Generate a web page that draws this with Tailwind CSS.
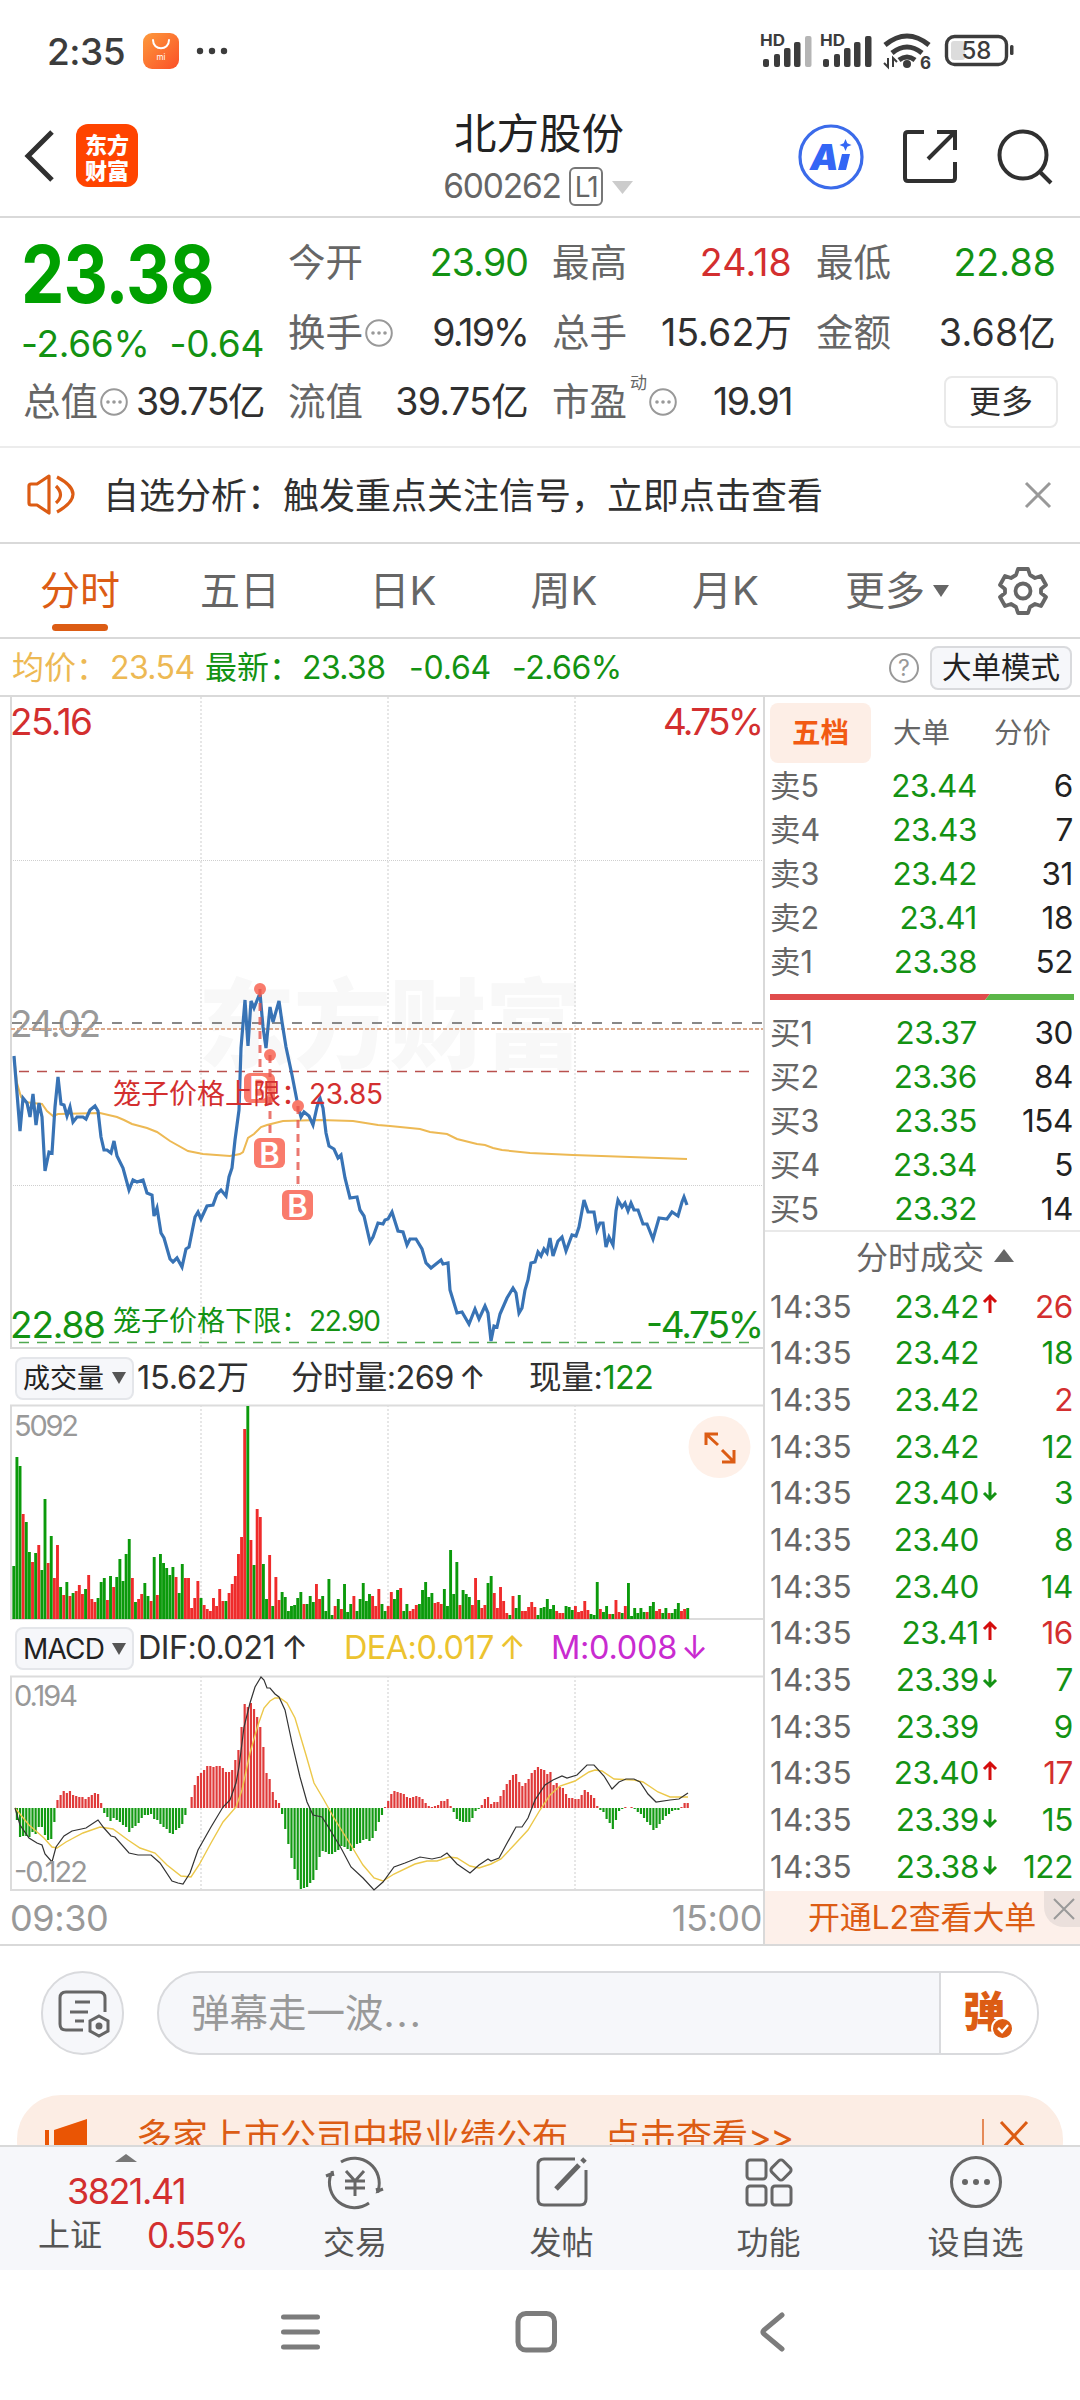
<!DOCTYPE html>
<html lang="zh-CN">
<head>
    <meta charset="UTF-8">
    <meta name="viewport" content="width=device-width, initial-scale=1.0">
    <title>北方股份 600262</title>
    <script src="https://cdn.jsdelivr.net/npm/@tailwindcss/browser@4"></script>
</head>
<body class="bg-white">

<div class="w-[1080px] h-[2400px] overflow-hidden flex flex-col bg-white text-[#303030] leading-none whitespace-nowrap font-['Inter','Noto_Sans_CJK_SC',sans-serif]">

    <!-- Status bar -->
    <div class="h-[102px] shrink-0 flex items-center justify-between pl-[47px] pr-[66px]">
        <div class="flex items-center">
            <span class="text-[37px] font-medium tracking-[-0.5px] w-[96px] text-[#3c3c3c]">2:35</span>
            <svg class="w-9 h-9" viewBox="0 0 36 36">
                <defs><linearGradient id="mi" x1="0" y1="0" x2="1" y2="1"><stop offset="0" stop-color="#fd9a3c"/><stop offset="1" stop-color="#fb4f27"/></linearGradient></defs>
                <rect width="36" height="36" rx="9" fill="url(#mi)"/>
                <path d="M10 7c0 11 16 11 16 0" fill="none" stroke="#fff" stroke-width="2" stroke-linecap="round"/>
                <text x="18" y="27" font-size="8" fill="#fff" text-anchor="middle">mi</text>
            </svg>
            <svg class="w-9 h-2 ml-[15px]" viewBox="0 0 36 8" fill="#3c3c3c"><circle cx="6" cy="4" r="3.2"/><circle cx="18" cy="4" r="3.2"/><circle cx="30" cy="4" r="3.2"/></svg>
        </div>
        <svg class="w-[254px] h-[40px]" viewBox="760 32 254 40" fill="#3c3c3c">
            <g id="signal">
                <text x="760" y="47" font-size="16" font-weight="700" textLength="25" lengthAdjust="spacingAndGlyphs">HD</text>
                <rect x="763" y="60" width="6" height="8" rx="2"/><rect x="774" y="55" width="6" height="13" rx="2"/><rect x="784" y="49" width="6.500" height="19" rx="2"/><rect x="794" y="43" width="6.500" height="25" rx="2"/>
            </g>
            <rect x="805" y="37" width="6.500" height="31" rx="2" fill="#b5b5b5"/>
            <use href="#signal" x="60"/>
            <rect x="865" y="37" width="6.500" height="31" rx="2"/>
            <g fill="none" stroke="#3c3c3c" stroke-width="5">
                <path d="M885 46q22-18 44 0"/><path d="M892 54q15-12 30 0"/><path d="M899 61q8-6 16 0"/>
            </g>
            <circle cx="907" cy="65" r="4"/>
            <path d="M888 59v9l-4-4M893 68v-9l4 4" fill="none" stroke="#3c3c3c" stroke-width="2"/>
            <text x="920" y="70" font-size="17" font-weight="700">6</text>
            <rect x="951" y="42" width="14" height="19" rx="3" fill="#dcdcdc"/>
            <rect x="946.500" y="37.500" width="60" height="28" rx="8" fill="none" stroke="#3c3c3c" stroke-width="3.400"/>
            <rect x="1010" y="46" width="3.500" height="10" rx="1.500"/>
            <text x="976.500" y="60" font-size="24" font-weight="500" text-anchor="middle">58</text>
        </svg>
    </div>

    <!-- Header -->
    <header class="h-[116px] shrink-0 flex items-center border-b-2 border-[#d9d9d9]">
        <div class="w-[358px] h-full flex items-start pl-[22px] pt-[22px]">
            <svg class="w-[34px] h-[64px]" viewBox="0 0 34 64" fill="none" stroke="#303030" stroke-width="5"><path d="M30 8 6 32l24 24"/></svg>
            <div class="ml-5 w-[62px] h-[63px] rounded-xl bg-[#ff4400] text-white font-black text-[22px] leading-[26px] flex flex-col items-center justify-center font-['Noto_Sans_CJK_SC',sans-serif]">
                <span>东方</span><span>财富</span>
            </div>
        </div>
        <div class="w-[362px] h-full flex flex-col items-center">
            <div class="text-[42.500px] mt-[11px] text-[#222]">北方股份</div>
            <div class="flex items-center mt-[11px] text-[#666] h-[40px] pr-[2px]">
                <span class="text-[33.500px] tracking-[-1.200px]">600262</span>
                <span class="ml-2 w-[34px] h-[39px] border-2 border-[#777] rounded-md text-[28px] flex items-center justify-center tracking-[-2px]">L1</span>
                <svg class="ml-[9px] w-[21px] h-[14px]" viewBox="0 0 21 14"><path d="M0 1h21l-10.500 13z" fill="#ccc"/></svg>
            </div>
        </div>
        <svg class="ml-[74px] w-[280px] h-[80px] -mt-1" viewBox="794 116 280 80" fill="none" stroke="#303030" stroke-width="4">
            <circle cx="831" cy="156" r="31" stroke="#3b6bea" stroke-width="3.200"/>
            <text x="810" y="169" font-size="36" font-weight="900" font-style="italic" fill="#3366f5" stroke="none" stroke-width="0">A</text>
            <path d="m838 169 4-16h8l-4 16z" fill="#3366f5" stroke="none"/>
            <path d="M845.500 138l1.800 4.200 4.200 1.800-4.200 1.800-1.800 4.200-1.800-4.200-4.200-1.800 4.200-1.800z" fill="#3366f5" stroke="none"/>
            <path d="M924 131h-16q-3 0-3 3v43q0 3 3 3h44q3 0 3-3v-16M937 131h18v18M954 132l-26 26"/>
            <circle cx="1023" cy="154" r="23.500"/><path d="m1039 170 12 12"/>
        </svg>
    </header>

    <!-- Quote summary -->
    <section class="h-[230px] shrink-0 flex gap-6 px-6 pt-[10px] border-b-2 border-[#ececec] text-[37.500px] text-[#666]">
        <div class="w-60 shrink-0 flex flex-col">
            <div class="h-[91px] flex items-center text-[#00a000] -ml-[3px]">
                <span class="text-[80px] font-bold origin-left scale-x-[0.86] tracking-[-1px]">23.38</span>
            </div>
            <div class="h-12 flex items-center justify-between text-[#139213] text-[37px] tracking-[-0.300px] -ml-[3px]"><span>-2.66%</span><span>-0.64</span></div>
            <div class="h-[69px] flex items-center justify-between -ml-[1px]">
                <div class="flex items-center">总值<svg class="w-[28px] h-[28px] ml-[2px]" viewBox="0 0 28 28"><use href="#info"/></svg></div>
                <span class="text-[#303030] tracking-[-1.500px]">39.75亿</span>
            </div>
        </div>
        <div class="grid grid-cols-3 grid-rows-[70px_69px_69px] gap-x-6 flex-1">
            <div class="flex items-center justify-between">今开<span class="text-[#139213] tracking-[-0.900px]">23.90</span></div>
            <div class="flex items-center justify-between">最高<span class="text-[#d32f2f] tracking-[0.200px]">24.18</span></div>
            <div class="flex items-center justify-between">最低<span class="text-[#139213] tracking-[0.100px]">22.88</span></div>
            <div class="flex items-center justify-between"><div class="flex items-center">换手<svg class="w-[28px] h-[28px] ml-[2px]" viewBox="0 0 28 28"><use href="#info"/></svg></div><span class="text-[#303030] tracking-[-1.900px]">9.19%</span></div>
            <div class="flex items-center justify-between">总手<span class="text-[#303030] tracking-[0.100px]">15.62万</span></div>
            <div class="flex items-center justify-between">金额<span class="text-[#303030] tracking-[0.200px]">3.68亿</span></div>
            <div class="flex items-center justify-between">流值<span class="text-[#303030] tracking-[-0.700px]">39.75亿</span></div>
            <div class="flex items-center justify-between"><div class="flex items-center">市盈<span class="text-[17px] -mt-9 ml-[3px]">动</span><svg class="w-[28px] h-[28px] ml-[2px]" viewBox="0 0 28 28"><use href="#info"/></svg></div><span class="text-[#303030] tracking-[-1.500px]">19.91</span></div>
            <div class="flex items-center justify-end -mr-[2px]"><div class="w-[114px] h-[52px] rounded-lg border-2 border-[#e9e9e9] text-[32px] text-[#303030] flex items-center justify-center">更多</div></div>
        </div>
        <svg class="hidden"><defs>
            <g id="info"><circle cx="14" cy="14" r="12.800" fill="none" stroke="#999" stroke-width="2"/><g fill="#999"><circle cx="8" cy="14" r="1.800"/><circle cx="14" cy="14" r="1.800"/><circle cx="20" cy="14" r="1.800"/></g></g>
        </defs></svg>
    </section>

    <!-- Notice -->
    <section class="h-[96px] shrink-0 flex items-center px-[26px] border-b-2 border-[#d9d9d9]">
        <svg class="w-[50px] h-[42px]" viewBox="0 0 50 42" fill="none" stroke="#dc5c14" stroke-width="3.200" stroke-linejoin="round"><path d="M11 10H5q-2 0-2 2v17q0 2 2 2h6l12 8V2zM30 12q9 9 0 17M31 3q32 17 0 35"/></svg>
        <span class="ml-[27px] text-[36px] pt-[2px]">自选分析：触发重点关注信号，立即点击查看</span>
        <svg class="ml-auto w-[32px] h-[32px]" viewBox="0 0 32 32" stroke="#999" stroke-width="3"><path d="m4 4 24 24M28 4 4 28"/></svg>
    </section>

    <!-- Period tabs -->
    <nav class="h-[95px] shrink-0 flex items-center border-b-2 border-[#d9d9d9] text-[40px] text-[#666]">
        <div class="w-[160px] h-full relative flex items-center justify-center text-[#dc5c14]">分时<span class="absolute bottom-[6px] w-[56px] h-[7px] rounded-full bg-[#dc5c14]"></span></div>
        <div class="w-[160px] text-center">五日</div>
        <div class="w-[166px] text-center">日K</div>
        <div class="w-[156px] text-center">周K</div>
        <div class="w-[167px] text-center">月K</div>
        <div class="flex items-center pl-9">更多<svg class="w-[16px] h-[12px] ml-[8px]" viewBox="0 0 16 12"><path d="M0 0h16L8 12z" fill="#666"/></svg></div>
        <svg class="ml-[48px] w-[52px] h-[52px]" viewBox="-26 -26 52 52" fill="none" stroke="#666" stroke-width="3.800" stroke-linejoin="round"><path d="M-5-22H5L7-16 12-13 18-15 23-6 18-2V2L23 6 18 15 12 13 7 16 5 22H-5L-7 16-12 13-18 15-23 6-18 2V-2L-23-6-18-15-12-13-7-16z"/><circle r="7.500"/></svg>
    </nav>

    <!-- Price info -->
    <section class="h-[58px] shrink-0 flex items-center pl-[12px] pr-[8px] pt-[2px] border-b-2 border-[#d9d9d9] text-[32px]">
        <span class="text-[#edb954] w-[98px]">均价：</span><span class="text-[#edb954] w-[95px] tracking-[-0.600px]">23.54</span>
        <span class="text-[#139213] w-[97px]">最新：</span><span class="text-[#139213] w-[107px] tracking-[-0.600px]">23.38</span>
        <span class="text-[#139213] w-[103px] tracking-[-0.200px]">-0.64</span><span class="text-[#139213] tracking-[-0.500px]">-2.66%</span>
        <div class="ml-auto w-[30px] h-[30px] rounded-full border-2 border-[#999] text-[#999] text-[23px] flex items-center justify-center">?</div>
        <div class="ml-[11px] w-[142px] h-[44px] rounded-lg border-2 border-[#d9dadd] bg-[#f6f7fa] text-[29.500px] text-[#222] flex items-center justify-center">大单模式</div>
    </section>

    <!-- Charts and order book -->
    <section class="h-[1249px] shrink-0 flex border-b-2 border-[#d9d9d9]">
        <div class="w-[763px] shrink-0 flex flex-col">

            <!-- Intraday price -->
            <svg class="w-[763px] h-[653px] shrink-0" viewBox="0 697 763 653" fill="none">
                <text x="198" y="1060" font-size="97" font-weight="900" fill="#f8f8f8" textLength="384">东方财富</text>
                <g stroke="#dedede" stroke-width="1.500" stroke-dasharray="2 2"><path d="M201 697v651M388 697v651M575 697v651"/></g>
                <g stroke="#cfcfcf" stroke-dasharray="1 1"><path d="M11 860.500h752M11 1185.500h752"/></g>
                <path d="M11 697v651h752" stroke="#d9d9d9" stroke-width="2"/>
                <text x="10" y="1037" font-size="37" fill="#999" textLength="91">24.02</text>
                <path d="M12 1023h751" stroke="#888" stroke-width="2" stroke-dasharray="10 10"/>
                <path d="M11 1029h752" stroke="#dba98b" stroke-width="2" stroke-dasharray="4 2"/>
                <path d="M19 1071.500h732" stroke="#b9504e" stroke-width="1.300" stroke-dasharray="10 8"/>
                <path d="M19 1342.500h732" stroke="#4fa850" stroke-width="1.300" stroke-dasharray="10 8"/>
                <polyline stroke="#edb954" stroke-width="2" points="14,1056 17,1083 21,1097 26,1102 32,1103 42,1104 47,1111 53,1116 58,1114 100,1113 117,1117 124,1120 132,1124 147,1128 157,1132 170,1141 188,1151 203,1154 230,1156 240,1154 243,1152 248,1138 254,1134 261,1127 267,1125 283,1121 320,1120 353,1121 378,1125 390,1126 420,1129 430,1132 447,1134 457,1139 477,1144 485,1145 493,1148 502,1150 530,1153 573,1155 687,1159"/>
                <polyline stroke="#3873b5" stroke-width="3.200" points="14,1056 17,1093 20,1131 23,1098 27,1103 30,1117 33,1094 36,1125 39,1103 42,1117 45,1171 49,1152 52,1153 55,1107 58,1077 61,1104 64,1105 67,1116 70,1107 73,1122 77,1117 83,1117 86,1119 90,1110 95,1106 98,1111 101,1137 104,1150 107,1150 111,1153 114,1141 117,1156 123,1168 129,1190 133,1180 137,1182 143,1180 147,1193 152,1195 154,1216 157,1208 161,1233 164,1238 170,1259 173,1262 177,1258 182,1267 186,1249 189,1247 195,1217 198,1212 201,1219 207,1206 213,1205 217,1194 221,1190 226,1196 229,1177 232,1168 235,1140 239,1110 241,1048 245,1000 248,1046 251,1001 254,1008 260,993 263,1027 266,1048 270,1007 273,1022 279,1001 282,1022 286,1047 292,1075 298,1106 301,1117 304,1112 309,1116 313,1125 317,1107 320,1098 323,1108 326,1133 329,1146 334,1149 338,1158 341,1155 345,1178 350,1198 357,1197 360,1210 364,1216 370,1242 373,1237 378,1223 383,1224 385,1220 388,1219 392,1212 398,1231 403,1232 407,1245 410,1239 416,1239 422,1249 426,1263 431,1268 441,1260 443,1264 448,1263 450,1290 457,1313 462,1312 469,1324 475,1309 479,1319 485,1306 488,1313 491,1341 494,1326 497,1327 500,1314 507,1298 513,1288 516,1293 519,1313 522,1308 525,1290 528,1280 531,1263 535,1262 538,1252 541,1256 544,1249 547,1253 550,1238 553,1256 558,1241 562,1237 566,1251 572,1235 576,1236 579,1227 584,1200 588,1212 594,1212 597,1230 600,1223 603,1223 606,1247 609,1237 613,1245 616,1211 618,1200 622,1207 625,1203 628,1211 631,1203 634,1210 638,1210 643,1224 647,1224 653,1239 659,1218 667,1219 672,1212 678,1216 682,1202 684,1197 687,1205"/>
                <g fill="#f97b6c">
                    <rect x="244" y="1073" width="31" height="30" rx="6"/><rect x="254" y="1138" width="31" height="30" rx="6"/><rect x="282" y="1190" width="31" height="30" rx="6"/>
                    <circle cx="260" cy="989" r="6"/><circle cx="270" cy="1055" r="6"/><circle cx="298" cy="1106" r="6"/>
                </g>
                <g stroke="#e5554c" stroke-opacity=".8" stroke-width="3" stroke-dasharray="8 6"><path d="M260 989v78M270 1055v78M298 1106v78"/></g>
                <g fill="#fff" font-size="31" font-weight="600" text-anchor="middle"><text x="259.500" y="1099">B</text><text x="269.500" y="1164.500">B</text><text x="297.500" y="1216.500">B</text></g>
                <g font-size="37" fill="#d32f2f"><text x="10" y="735" textLength="83">25.16</text><text x="663" y="735" textLength="101">4.75%</text></g>
                <g font-size="37" fill="#139213"><text x="10" y="1338" textLength="96">22.88</text><text x="646" y="1338" textLength="118">-4.75%</text></g>
                <g font-size="28" fill="#d32f2f"><text x="113" y="1104">笼子价格上限：</text><text x="309" y="1103.500" textLength="74">23.85</text></g>
                <g font-size="28" fill="#139213"><text x="113" y="1331">笼子价格下限：</text><text x="309" y="1330.500" textLength="72">22.90</text></g>
            </svg>

            <!-- Volume -->
            <div class="h-[54px] shrink-0 flex items-center pl-[15px] pt-[2px] text-[32.500px]">
                <div class="w-[119px] h-[43px] rounded-lg border-2 border-[#e4e6ea] bg-[#f6f7fa] text-[27px] text-[#222] flex items-center justify-center gap-[8px]">成交量<svg class="w-[14px] h-[12px]" viewBox="0 0 14 12"><path d="M0 0h14L7 12z" fill="#555"/></svg></div>
                <span class="w-[157px] pl-[3px] tracking-[-0.200px]">15.62万</span>
                <span class="w-[238px] tracking-[-0.600px]">分时量:269<span class="inline-block ml-[5px]">↑</span></span>
                <span class="tracking-[-0.300px]">现量:<span class="text-[#139213] tracking-[-0.800px]">122</span></span>
            </div>
            <svg class="w-[763px] h-[216px] shrink-0" viewBox="0 1404 763 216" fill="none">
                <g stroke="#dedede" stroke-width="1.500" stroke-dasharray="2 2"><path d="M201 1405v213M388 1405v213M575 1405v213"/></g>
                <path d="M763 1405.500H11V1619h752" stroke="#dcdcdc" stroke-width="2"/>
                <g id="volume"></g>
                <text x="14" y="1435.500" font-size="29" fill="#999" textLength="65">5092</text>
                <circle cx="719.500" cy="1447" r="31" fill="#fef0e8"/>
                <path d="M706 1445v-11h12M706 1434l12 11M734 1450v12h-12M734 1462l-12-12" stroke="#dc5c14" stroke-width="3"/>
            </svg>

            <!-- MACD -->
            <div class="h-[55px] shrink-0 flex items-center pl-[15px] pt-[2px] text-[32.500px]">
                <div class="w-[119px] h-[43px] rounded-lg border-2 border-[#e4e6ea] bg-[#f6f7fa] text-[28px] text-[#222] flex items-center justify-center gap-[8px] tracking-[-0.800px]">MACD<svg class="w-[14px] h-[12px]" viewBox="0 0 14 12"><path d="M0 0h14L7 12z" fill="#555"/></svg></div>
                <span class="w-[210px] pl-1 tracking-[-0.600px]">DIF:0.021<span class="inline-block ml-[6px]">↑</span></span>
                <span class="w-[207px] tracking-[-0.600px] text-[#ecc32f]">DEA:0.017<span class="inline-block ml-[5px]">↑</span></span>
                <span class="tracking-[-0.300px] text-[#c92bd0]">M:0.008<span class="inline-block ml-[4px]">↓</span></span>
            </div>
            <svg class="w-[763px] h-[216px] shrink-0" viewBox="0 1675 763 216" fill="none">
                <g stroke="#dedede" stroke-width="1.500" stroke-dasharray="2 2"><path d="M201 1676v213M388 1676v213M575 1676v213"/></g>
                <path d="M763 1676.500H11V1890h752" stroke="#dcdcdc" stroke-width="2"/>
                <g id="macd"></g>
                <polyline stroke="#ecc84a" stroke-width="1.400" points="15,1808 29,1825 44,1838 52,1847 57,1848 66,1842 83,1833 100,1827 113,1829 128,1840 140,1848 155,1853 167,1865 181,1876 191,1877 199,1865 211,1843 223,1822 236,1807 242,1790 250,1753 258,1725 264,1708 270,1701 275,1698 280,1698 287,1703 295,1718 306,1755 314,1783 324,1800 334,1818 349,1842 363,1865 374,1878 383,1881 394,1874 415,1864 427,1861 437,1861 449,1857 457,1858 470,1866 479,1868 491,1864 501,1859 516,1843 528,1830 540,1810 550,1795 560,1786 575,1781 589,1772 595,1770 602,1771 614,1779 634,1780 643,1782 658,1792 670,1797 688,1797"/>
                <polyline stroke="#333" stroke-width="1.200" points="15,1808 20,1825 29,1838 37,1843 42,1845 45,1854 52,1862 56,1847 64,1836 72,1831 86,1828 98,1820 104,1828 111,1836 115,1837 129,1853 138,1855 151,1855 160,1863 172,1881 178,1883 183,1884 190,1873 198,1850 211,1827 223,1807 230,1800 236,1783 239,1767 244,1727 250,1703 255,1687 261,1677 264,1680 267,1688 270,1688 275,1694 279,1697 285,1710 292,1743 300,1777 307,1802 313,1815 322,1817 329,1828 341,1848 351,1867 363,1878 374,1890 383,1882 394,1867 405,1863 420,1857 432,1859 441,1857 447,1853 457,1864 470,1873 479,1865 488,1859 491,1861 499,1858 506,1845 516,1827 522,1827 528,1818 535,1800 545,1785 553,1780 562,1776 567,1778 577,1775 587,1765 594,1765 604,1776 612,1789 619,1782 626,1779 634,1779 640,1782 648,1794 656,1802 670,1800 679,1799 688,1793"/>
                <g font-size="29" fill="#999"><text x="14" y="1706" textLength="64">0.194</text><text x="14" y="1881.500" textLength="74">-0.122</text></g>
            </svg>
            <div class="flex-1 flex items-center justify-between pl-[10px] pr-[1px] text-[36px] text-[#999] tracking-[-0.400px]"><span>09:30</span><span>15:00</span></div>
        </div>

        <!-- Order book -->
        <div class="flex-1 min-w-0 border-l-2 border-[#d9d9d9] flex flex-col text-[31.500px]">
            <div class="h-[72px] shrink-0 flex items-center pl-[5px] text-[28.500px] text-[#666]">
                <div class="w-[101px] h-[60px] rounded-lg bg-[#fdeee6] text-[#f25a13] font-bold flex items-center justify-center">五档</div>
                <div class="w-[101px] text-center">大单</div>
                <div class="w-[101px] text-center">分价</div>
            </div>
            <div id="asks" class="h-[218px] shrink-0 mt-[-5px]"></div>
            <svg class="w-[304px] h-[6px] ml-[5px] mt-[12px] mb-[12px] shrink-0" viewBox="0 0 304 6"><path d="M0 0h220l-5 6H0z" fill="#e04c4c"/><path d="M220 0h84v6h-89z" fill="#5bb649"/></svg>
            <div id="bids" class="h-[219px] shrink-0 -mt-px"></div>
            <div class="h-[53px] shrink-0 border-t-2 border-[#e9e9e9] flex items-center pl-[91px] text-[32px] text-[#666]">分时成交<svg class="w-[20px] h-[13px] ml-[10px] mb-1" viewBox="0 0 20 13"><path d="M0 13h20L10 0z" fill="#666"/></svg></div>
            <div id="trades" class="shrink-0 h-[608px]"></div>
            <div class="flex-1 relative bg-[#fdf0ea] text-[#dc5c14] text-[32px] flex items-center pl-[43px] tracking-[-0.200px]">开通L2查看大单
                <div class="absolute right-0 top-0 w-[36px] h-[36px] rounded-bl-[20px] bg-[#ebe0dc] flex items-center justify-center pl-1">
                    <svg class="w-[22px] h-[22px]" viewBox="0 0 22 22" stroke="#999" stroke-width="2"><path d="m1 1 20 20M21 1 1 21"/></svg>
                </div>
            </div>
        </div>
    </section>

    <!-- Comment input -->
    <section class="h-[149px] shrink-0 flex items-start pt-[25px] pl-[41px]">
        <div class="w-[83px] h-[84px] rounded-full border-2 border-[#d9dadd] bg-[#f6f7fa] flex items-center justify-center">
            <svg class="w-[54px] h-[52px]" viewBox="0 0 54 52" fill="none" stroke="#666" stroke-width="3"><path d="M27 43H10q-6 0-6-6V11q0-6 6-6h33q6 0 6 6v14M19 15h15M14 25h18M19 34h9"/><path d="m43 29 9 5v10l-9 5-9-5V34z"/><circle cx="43" cy="39" r="2" fill="#666"/></svg>
        </div>
        <div class="ml-[33px] w-[882px] h-[84px] rounded-full border-2 border-[#d9dadd] bg-[#f6f7fa] flex overflow-hidden">
            <div class="flex-1 flex items-center pl-[32px] text-[38.500px] text-[#999]">弹幕走一波<span class="tracking-[2px]">...</span></div>
            <div class="w-[98px] bg-white border-l-2 border-[#d9dadd] relative pl-[22px] pt-[18px] text-[42px] font-black text-[#dc5c14]">弹
                <svg class="absolute left-[50px] top-[44px] w-[23px] h-[23px]" viewBox="0 0 23 23"><circle cx="11.500" cy="11.500" r="10.500" fill="#dc5c14" stroke="#fff" stroke-width="2"/><path d="m7 11 4 4 6-7" fill="none" stroke="#fff" stroke-width="2.500"/></svg>
            </div>
        </div>
    </section>

    <!-- Announcement, partly behind the tab bar -->
    <section class="h-[50px] shrink-0 overflow-hidden px-[17px]">
        <div class="h-[90px] rounded-[44px] bg-[#fcede4] flex items-start text-[#dc5c14] pl-[28px] pt-[24px]">
            <svg class="w-[42px] h-[40px]" viewBox="0 0 42 40" fill="#ea5504"><path d="M0 11h4v29H0zM9 11 42 0v40H9z"/></svg>
            <span class="ml-[49px] text-[36px]">多家上市公司中报业绩公布　点击查看<span class="tracking-[-1.500px]">&gt;&gt;</span></span>
            <span class="ml-auto w-[2px] h-[40px] bg-[#e58a58]"></span>
            <svg class="ml-[15px] mr-[34px] w-[30px] h-[40px]" viewBox="0 0 30 40" stroke="#dc5c14" stroke-width="3"><path d="m2 3 26 28M28 3 2 31"/></svg>
        </div>
    </section>

    <!-- Bottom tab bar -->
    <nav class="h-[125px] shrink-0 flex bg-[#f6f7fa] border-t-2 border-[#d9d9d9] text-[32px] text-[#555]">
        <div class="w-[252px] flex flex-col items-center pt-[7px]">
            <svg class="w-[22px] h-[8px]" viewBox="0 0 22 8"><path d="M0 8h22L11 0z" fill="#777"/></svg>
            <span class="mt-[11px] h-[36px] text-[36px] text-[#d32f2f] tracking-[-1.500px]">3821.41</span>
            <div class="mt-[6px] h-[40px] flex items-center w-full pl-[38px]"><span class="w-[109px]">上证</span><span class="text-[35px] text-[#d32f2f] tracking-[-1.500px]">0.55%</span></div>
        </div>
        <div class="w-[206px] flex flex-col items-center pt-[6px]">
            <svg class="w-[60px] h-[58px]" viewBox="-30 -29 60 58" fill="none" stroke="#666" stroke-width="3"><path d="M-14-20A25 25 0 0 1 23 9l5-2M14 21A25 25 0 0 1-24-8l-5 2M-9-11 0-1 9-11M0-1v15M-10-1h20M-10 6h20M23 11l-1-5M-23-11l1 5"/></svg>
            <span class="mt-[16px]">交易</span>
        </div>
        <div class="w-[207px] flex flex-col items-center pt-[6px]">
            <svg class="w-[60px] h-[58px]" viewBox="-30 -29 60 58" fill="none" stroke="#666" stroke-width="3"><path d="M13-23h-31q-6 0-6 6v34q0 6 6 6h36q6 0 6-6v-29"/><path d="M-6 7 17-17M20-20l3-3" stroke-width="5"/></svg>
            <span class="mt-[16px]">发帖</span>
        </div>
        <div class="w-[207px] flex flex-col items-center pt-[6px]">
            <svg class="w-[60px] h-[58px]" viewBox="-30 -29 60 58" fill="none" stroke="#666" stroke-width="3"><rect x="-22" y="-22" width="19" height="19" rx="3"/><rect x="-22" y="4" width="19" height="19" rx="3"/><rect x="3" y="4" width="19" height="19" rx="3"/><rect x="4" y="-20" width="16" height="16" rx="3" transform="rotate(45 12 -12)"/></svg>
            <span class="mt-[16px]">功能</span>
        </div>
        <div class="w-[207px] flex flex-col items-center pt-[6px]">
            <svg class="w-[60px] h-[58px]" viewBox="-30 -29 60 58" fill="none" stroke="#666" stroke-width="3"><circle r="24.500"/><g fill="#666" stroke="none"><circle cx="-11" r="3"/><circle r="3"/><circle cx="11" r="3"/></g></svg>
            <span class="mt-[16px]">设自选</span>
        </div>
    </nav>

    <!-- System navigation -->
    <div class="flex-1 flex items-start pt-[36px] pl-[275px]">
        <svg class="w-[520px] h-[52px]" viewBox="275 2306 520 52" fill="none" stroke="#7c7c7c" stroke-width="5" stroke-linecap="round"><path d="M283.500 2317h34M283.500 2332h34M283.500 2347h34"/><rect x="518" y="2313.500" width="36.500" height="36.500" rx="8"/><path d="m782 2315-18 15q-2 2 0 4l18 15"/></svg>
    </div>
</div>

<script>
    // sign carries the colour: positive = up (red), negative = down (green)
    const volume = [
        -53,-162,-153,105,-97,-67,57,-66,74,-49,-120,56,-83,41,74,-32,24,-37,23,-26,28,34,25,-30,44,20,17,-21,-37,-41,
        19,-43,32,-42,-60,-38,-65,-80,41,-17,20,25,-36,-23,18,-62,24,-65,-56,-51,-44,-52,42,-26,-55,41,41,11,21,38,
        -21,14,10,8,21,13,30,18,-18,26,35,43,65,82,190,-213,79,-54,110,102,-55,-20,64,-13,42,19,-27,-22,-8,-13,
        -14,-21,-27,15,-15,-23,-17,35,20,-23,-8,-40,-4,13,-20,10,-35,-7,-15,23,-8,-20,-36,-18,-25,23,13,30,-15,-8,
        13,27,-20,-29,31,-8,-15,8,10,14,-15,-29,-37,-22,-26,16,17,15,-30,-13,-69,-25,-57,14,-29,-25,-22,14,41,-19,
        11,14,-36,-43,26,11,32,18,6,-4,23,-11,-24,8,8,12,17,12,-4,-11,-12,-20,-10,-14,8,6,6,-13,-12,-9,
        13,7,8,18,9,-5,-4,-37,10,-7,-13,5,-5,19,7,-6,13,-36,-3,-11,-6,-11,-7,7,-13,-17,8,10,-6,-11,
        6,-6,-10,-16,8,10,-11
    ];
    const macd = [
        0,-12,-29,-28,-28,-29,-24,-26,-19,-19,-27,-32,-31,-14,8,13,17,15,17,13,12,11,11,9,11,13,15,14,5,-5,
        -9,-13,-10,-12,-14,-17,-19,-24,-20,-18,-15,-10,-7,-7,-6,-11,-12,-16,-19,-21,-25,-26,-22,-20,-16,-7,0,11,23,32,
        35,38,42,42,41,42,42,40,36,36,38,48,58,81,104,101,105,99,91,81,61,35,29,16,8,5,-6,-21,-36,-50,
        -61,-72,-81,-80,-79,-75,-72,-62,-49,-43,-44,-46,-46,-44,-42,-38,-39,-41,-43,-40,-36,-35,-32,-31,-33,-30,-23,-14,-7,1,
        7,14,17,16,15,14,11,10,11,12,11,9,5,2,1,2,3,7,7,9,2,-4,-11,-13,-14,-14,-14,-10,-3,-1,
        3,9,11,4,6,6,12,18,24,28,33,34,26,22,25,29,35,38,41,39,38,34,36,23,25,21,20,14,10,10,
        9,9,13,18,16,13,10,2,-2,-4,-11,-15,-21,-12,-3,-1,1,0,1,-1,-4,-6,-10,-14,-17,-22,-20,-16,-12,-8,
        -6,-3,-2,-2,1,5,5
    ];
    const x = i => (13.8 + i * 3.12).toFixed(2);

    document.getElementById('volume').innerHTML = volume.map((v, i) =>
        `<path d="M${x(i)} 1619v${-Math.abs(v)}" stroke="${v > 0 ? '#ef2b2b' : '#0b9a0b'}" stroke-width="2.900"/>`).join('');
    document.getElementById('macd').innerHTML = macd.map((v, i) =>
        `<path d="M${x(i)} 1808v${-v}" stroke="${v > 0 ? '#e03a3a' : '#139a13'}" stroke-width="2.200"/>`).join('');

    const asks = [['卖5', '23.44', 6], ['卖4', '23.43', 7], ['卖3', '23.42', 31], ['卖2', '23.41', 18], ['卖1', '23.38', 52]];
    const bids = [['买1', '23.37', 30], ['买2', '23.36', 84], ['买3', '23.35', 154], ['买4', '23.34', 5], ['买5', '23.32', 14]];
    const level = ([name, price, qty]) => `
        <div class="h-[44px] flex items-center pl-[5px] pr-[7px]">
            <span class="w-[60px] text-[#666] text-[30.500px]">${name}</span>
            <span class="w-[147px] text-right text-[#139213] tracking-[-0.400px]">${price}</span>
            <span class="flex-1 text-right text-[#222] tracking-[-0.400px]">${qty}</span>
        </div>`;
    document.getElementById('asks').innerHTML = asks.map(level).join('');
    document.getElementById('bids').innerHTML = bids.map(level).join('');

    const trades = [
        ['23.42', 'up', 26, 'r'], ['23.42', '', 18, 'g'], ['23.42', '', 2, 'r'], ['23.42', '', 12, 'g'],
        ['23.40', 'down', 3, 'g'], ['23.40', '', 8, 'g'], ['23.40', '', 14, 'g'], ['23.41', 'up', 16, 'r'],
        ['23.39', 'down', 7, 'g'], ['23.39', '', 9, 'g'], ['23.40', 'up', 17, 'r'], ['23.39', 'down', 15, 'g'],
        ['23.38', 'down', 122, 'g']
    ];
    const arrows = {
        up: '<path d="M8 20V3M2 9l6-6 6 6" stroke="#d40d0d"/>',
        down: '<path d="M8 2v17M2 13l6 6 6-6" stroke="#139213"/>'
    };
    document.getElementById('trades').innerHTML = trades.map(([price, dir, qty, side]) => `
        <div class="h-[46.700px] flex items-center pl-[5px] pr-[7px]">
            <span class="w-[84px] text-[#666] tracking-[0.200px]">14:35</span>
            <span class="w-[125px] text-right text-[#139213] tracking-[-0.400px]">${price}</span>
            <svg class="w-[16px] h-[22px] ml-[3px] mb-1" viewBox="0 0 16 22" fill="none" stroke-width="3">${arrows[dir] || ''}</svg>
            <span class="flex-1 text-right tracking-[-0.400px] ${side === 'r' ? 'text-[#d32f2f]' : 'text-[#139213]'}">${qty}</span>
        </div>`).join('');
</script>
</body>
</html>
